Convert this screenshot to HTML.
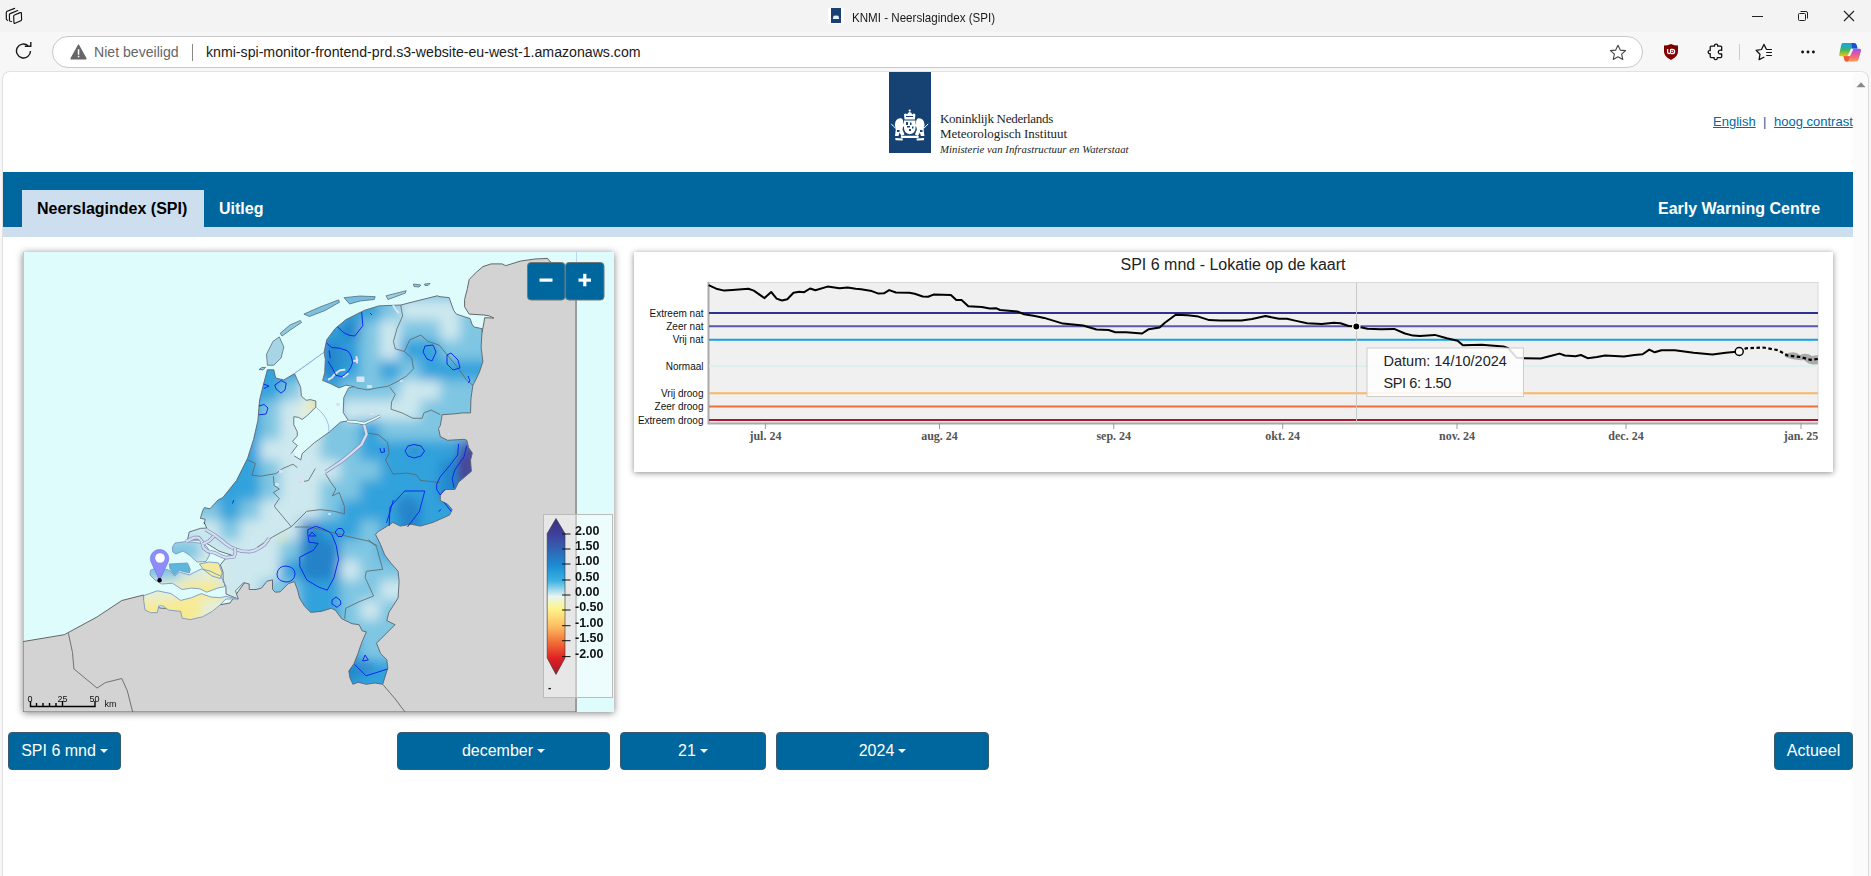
<!DOCTYPE html>
<html><head><meta charset="utf-8">
<style>
*{box-sizing:border-box;margin:0;padding:0}
html,body{width:1871px;height:876px;overflow:hidden;background:#f7f7f7;font-family:"Liberation Sans",sans-serif}
.abs{position:absolute}
#titlebar{position:absolute;left:0;top:0;width:1871px;height:32px;background:#f3f3f3}
#toolbar{position:absolute;left:0;top:32px;width:1871px;height:39px;background:#f7f7f7}
#addr{position:absolute;left:52px;top:36px;width:1591px;height:32px;border:1px solid #c9c9c9;border-radius:16px;background:#fff}
#page{position:absolute;left:2px;top:71px;width:1867px;height:805px;background:#fff;border-top-left-radius:8px;border-top-right-radius:8px;border-left:1px solid #e2e2e2;border-top:1px solid #e2e2e2;border-right:1px solid #dcdcdc;overflow:hidden}
#scroll{position:absolute;left:1853px;top:73px;width:15px;height:803px;background:#fbfbfb;border-top-right-radius:7px}
.btn{position:absolute;background:#00679e;border:1px solid #3a5a70;border-radius:4px;color:#fff;font-size:16px;text-align:center;line-height:36px}
.caret{display:inline-block;width:0;height:0;border-left:4px solid transparent;border-right:4px solid transparent;border-top:4px solid #fff;vertical-align:3px;margin-left:4px}
</style></head><body>
<div id="titlebar">
  <svg class="abs" style="left:0;top:0" width="30" height="30" viewBox="0 0 30 30"><g fill="none" stroke="#111" stroke-width="1.15" stroke-linecap="round" stroke-linejoin="round"><path d="M7.6,20.3 L6.6,19.6 Q6.3,19.3 6.3,18.8 L6.3,12.5 Q6.3,11.6 7.2,11.2 L14.6,8.4"/><path d="M11.6,21.5 L10.2,21.2 Q9.5,21 9.5,20.3 L9.4,14.8 Q9.4,14 10.2,13.6 L17.7,10.5"/><path d="M13.7,16.2 Q13.7,15.3 14.5,15 L20.2,12.6 Q21.4,12.2 21.4,13.4 L21.6,19.6 Q21.6,20.4 20.8,20.7 L15,23.2 Q13.9,23.6 13.9,22.4z"/></g></svg>
  <div class="abs" style="left:828px;top:8px;width:16px;height:16px;background:#fff"></div>
  <div class="abs" style="left:831px;top:8px;width:10px;height:15px;background:#1a3f73"></div><svg class="abs" style="left:831px;top:8px" width="10" height="15" viewBox="0 0 10 15"><path d="M1.8,11 L2.5,8 Q3.5,7 4.2,8 L5,7 L5.8,8 Q6.5,7 7.5,8 L8.2,11z" fill="#e8eef6"/></svg>
  <div class="abs" style="left:852px;top:8.5px;font-size:13.4px;color:#1a1a1a;line-height:18px;transform:scaleX(0.866);transform-origin:0 0;white-space:nowrap">KNMI - Neerslagindex (SPI)</div>
  <div class="abs" style="left:1752px;top:16px;width:11px;height:1px;background:#222"></div>
  <svg class="abs" style="left:1797px;top:10px" width="12" height="12" viewBox="0 0 12 12"><g fill="none" stroke="#222" stroke-width="1"><rect x="1.5" y="3.5" width="7" height="7" rx="1"/><path d="M3.5 1.5h5.5a1.5 1.5 0 0 1 1.5 1.5v5.5"/></g></svg>
  <svg class="abs" style="left:1843px;top:10px" width="12" height="12" viewBox="0 0 12 12"><path d="M1 1L11 11M11 1L1 11" stroke="#222" stroke-width="1.1"/></svg>
</div>
<div id="toolbar">
  <svg class="abs" style="left:15px;top:10px" width="18" height="18" viewBox="0 0 18 18"><path d="M15.5 9 A7 7 0 1 1 13.2 3.8" fill="none" stroke="#1a1a1a" stroke-width="1.4"/><path d="M9.8 4.2 L15.8 4.2 L15.8 -1" fill="none" stroke="#1a1a1a" stroke-width="1.4"/></svg>
</div>
<div id="addr">
  <svg class="abs" style="left:17px;top:7px" width="17" height="16" viewBox="0 0 17 16"><path d="M8.5 1 L16 14.5 Q16.3 15 15.5 15 L1.5 15 Q0.7 15 1 14.5z" fill="#666" stroke="#666" stroke-width="1.2" stroke-linejoin="round"/><rect x="7.8" y="5.2" width="1.5" height="5.5" fill="#fff"/><rect x="7.8" y="11.8" width="1.5" height="1.5" fill="#fff"/></svg>
  <div class="abs" style="left:41px;top:6px;font-size:14.1px;color:#666;line-height:18px">Niet beveiligd</div>
  <div class="abs" style="left:139px;top:7px;width:1px;height:17px;background:#888"></div>
  <div class="abs" style="left:153px;top:6px;font-size:14.15px;color:#1a1a1a;line-height:18px">knmi-spi-monitor-frontend-prd.s3-website-eu-west-1.amazonaws.com</div>
  <svg class="abs" style="left:1556px;top:7px" width="18" height="17" viewBox="0 0 18 17"><path d="M9 1.2 L11.3 6.1 L16.6 6.6 L12.6 10.2 L13.8 15.5 L9 12.7 L4.2 15.5 L5.4 10.2 L1.4 6.6 L6.7 6.1z" fill="none" stroke="#444" stroke-width="1.1" stroke-linejoin="round"/></svg>
</div>
<!-- toolbar right icons -->
<svg class="abs" style="left:1663px;top:43px" width="16" height="18" viewBox="0 0 16 18"><path d="M8 0.9 Q11.5 2.5 15 2.6 L15 8.5 Q15 13.5 8 17 Q1 13.5 1 8.5 L1 2.6 Q4.5 2.5 8 0.9z" fill="#800000"/><path d="M4.6,5.9 V9 Q4.6,10.6 6.1,10.6 Q7.6,10.6 7.6,9 V5.9" fill="none" stroke="#fff" stroke-width="1.3"/><path d="M7.9,6.3 H9.2 Q11.6,6.3 11.6,8.4 Q11.6,10.6 9.2,10.6 H7.9" fill="none" stroke="#fff" stroke-width="1.3"/><circle cx="9.3" cy="8.4" r="0.8" fill="#fff"/></svg>
<svg class="abs" style="left:1707px;top:43px" width="17" height="18" viewBox="0 0 17 18"><path d="M3.2,4.2 Q3.2,3.1 4.3,3.1 L7.6,3.1 Q7.2,1.2 9.1,1.2 Q11,1.2 10.6,3.1 L13.6,3.1 Q14.7,3.1 14.7,4.2 L14.7,7.3 Q11.3,6.8 11.3,9.1 Q11.3,11.4 14.7,10.9 L14.7,13.6 Q14.7,14.7 13.6,14.7 L10.2,14.7 Q10.6,16.6 8.7,16.6 Q6.8,16.6 7.2,14.7 L4.3,14.7 Q3.2,14.7 3.2,13.6 L3.2,10.6 Q1.2,11 1.2,9.1 Q1.2,7.2 3.2,7.6z" fill="none" stroke="#111" stroke-width="1.3" stroke-linejoin="round"/></svg>
<div class="abs" style="left:1739px;top:44px;width:1px;height:16px;background:#ccc"></div>
<svg class="abs" style="left:1755px;top:43px" width="19" height="18" viewBox="0 0 19 18"><path d="M8.9,14.2 L4.1,16.6 L5,11.2 L1.1,7.3 L6.5,6.5 L8.9,1.4 L11.4,6.3" fill="none" stroke="#111" stroke-width="1.25" stroke-linejoin="round" stroke-linecap="round"/><path d="M11.2,6.5h5.7M11.2,9.5h5.7M11.2,12.5h5.7" stroke="#111" stroke-width="1.2"/></svg>
<svg class="abs" style="left:1798px;top:48px" width="20" height="8" viewBox="0 0 20 8"><circle cx="4.6" cy="4" r="1.45" fill="#111"/><circle cx="10" cy="4" r="1.45" fill="#111"/><circle cx="15.4" cy="4" r="1.45" fill="#111"/></svg>
<svg class="abs" style="left:1836px;top:40px" width="28" height="24" viewBox="1836 40 28 24"><defs><linearGradient id="cg1" x1="0" y1="0" x2="0" y2="1"><stop offset="0" stop-color="#12a4f4"/><stop offset=".5" stop-color="#3cb46c"/><stop offset="1" stop-color="#f2cc00"/></linearGradient><linearGradient id="cg2" x1="0" y1="0" x2="0" y2="1"><stop offset="0" stop-color="#a050f0"/><stop offset=".55" stop-color="#f0608c"/><stop offset="1" stop-color="#ffa040"/></linearGradient></defs>
<path d="M1842.5,43 L1854,43 Q1856,43 1856.6,45 L1857.5,48.5 L1851,48.5 L1847.5,56.3 L1840.5,56.3 Q1838.8,56.3 1839.2,54.5 L1841,46 Q1841.5,43 1842.5,43z" fill="url(#cg1)"/>
<path d="M1851.5,43 L1854,43 Q1856,43 1856.6,45 L1857.5,48.5 L1852,48.5z" fill="#1a50d8"/>
<path d="M1859.5,48.8 Q1861.5,48.8 1861,51 L1858.5,59.5 Q1857.8,61.6 1855.5,61.6 L1846.5,61.6 Q1845,61.6 1844.5,60 L1843.5,56.3 L1850,56.3 L1853.5,48.8z" fill="url(#cg2)"/>
<path d="M1843.5,56.3 L1850,56.3 L1848,61.6 L1846.5,61.6 Q1845,61.6 1844.5,60z" fill="#f05a30"/></svg>

<div id="page">
</div>
<div id="scroll"><svg class="abs" style="left:2.5px;top:9px" width="10" height="6" viewBox="0 0 10 6"><path d="M5 0.3 L9.6 5.2 L0.4 5.2z" fill="#8a8a8a"/></svg></div>

<div id="content">
<!-- header -->
<div class="abs" style="left:889px;top:72px;width:42px;height:81px;background:#154273"></div>
<svg class="abs" style="left:889px;top:72px" width="42" height="81" viewBox="0 0 42 81">
<g fill="#fff">
<path d="M15.5,47.5 L15,42.5 Q16.5,40.5 18,42.5 Q19,40 20.7,40 Q22.4,40 23.4,42.5 Q25,40.5 26.4,42.5 L25.9,47.5z"/>
<circle cx="20.7" cy="38.6" r="1.1"/>
<path d="M15,48.5 H26.5 V56 Q26.5,61.5 20.7,62.2 Q15,61.5 15,56z"/>
<path d="M6,64 L6.8,57 Q5,53 6.5,49.5 Q8.5,46 12,46.3 Q14.5,47 14.3,50.5 L15.5,53.5 Q13.5,55 13.5,57.5 L15.5,62.5 L12.5,64 L10.5,60.5 L9.5,64z"/>
<path d="M6,64 L6.8,57 Q5,53 6.5,49.5 Q8.5,46 12,46.3 Q14.5,47 14.3,50.5 L15.5,53.5 Q13.5,55 13.5,57.5 L15.5,62.5 L12.5,64 L10.5,60.5 L9.5,64z" transform="translate(41.4,0) scale(-1,1)"/>
<rect x="11.8" y="63.8" width="18" height="2.3" rx="1"/>
<path d="M6.2,66 L13.9,66.4 L13.6,68.6 L6.6,68.2z"/>
<path d="M35.2,66 L27.5,66.4 L27.8,68.6 L34.8,68.2z"/>
</g>
<g fill="none" stroke="#fff" stroke-width="1">
<path d="M6.8,56.5 Q4,54 2.3,51.8"/><path d="M34.6,56.5 Q37.4,54 39.1,51.8"/>
</g>
<g fill="#154273">
<rect x="17" y="50" width="2" height="3"/><rect x="21" y="50.5" width="1.5" height="2.5"/><rect x="18" y="54" width="3" height="1.5"/><rect x="20" y="57" width="2" height="2"/><rect x="23" y="54.5" width="1.5" height="2"/>
<rect x="8" y="58" width="2.5" height="2"/><rect x="31" y="58" width="2.5" height="2"/><rect x="17" y="44" width="7" height="1"/>
</g>
</svg>
<div class="abs" style="left:940px;top:111px;font-family:'Liberation Serif',serif;font-size:13px;color:#242424;line-height:16px;letter-spacing:-0.27px">Koninklijk Nederlands</div>
<div class="abs" style="left:940px;top:126px;font-family:'Liberation Serif',serif;font-size:13px;color:#242424;line-height:16px;letter-spacing:-0.05px">Meteorologisch Instituut</div>
<div class="abs" style="left:940px;top:141.5px;font-family:'Liberation Serif',serif;font-style:italic;font-size:10.8px;color:#242424;line-height:14px">Ministerie van Infrastructuur en Waterstaat</div>
<div class="abs" style="left:1713px;top:114px;font-size:13px;line-height:16px;color:#0069a6"><span style="text-decoration:underline">English</span></div>
<div class="abs" style="left:1763px;top:114px;font-size:13px;line-height:16px;color:#0069a6">|</div>
<div class="abs" style="left:1774px;top:114px;font-size:13px;line-height:16px;color:#0069a6"><span style="text-decoration:underline">hoog contrast</span></div>
<!-- nav -->
<div class="abs" style="left:3px;top:172px;width:1850px;height:55px;background:#00679e"></div>
<div class="abs" style="left:3px;top:227px;width:1850px;height:10px;background:#cddeef"></div>
<div class="abs" style="left:22px;top:190px;width:182px;height:37px;background:#cddeef"></div>
<div class="abs" style="left:37px;top:200px;font-size:16px;font-weight:bold;line-height:18px;color:#000">Neerslagindex (SPI)</div>
<div class="abs" style="left:219px;top:200px;font-size:16px;font-weight:bold;line-height:18px;color:#fff">Uitleg</div>
<div class="abs" style="left:1658px;top:200px;font-size:16px;font-weight:bold;line-height:18px;color:#fff">Early Warning Centre</div>
<!-- map box -->
<div id="map" class="abs" style="left:23px;top:252px;width:591px;height:460px;background:#dffcfc;box-shadow:0 1px 7px rgba(0,0,0,.5);overflow:hidden">
<svg class="abs" style="left:0;top:0" width="591" height="460" viewBox="23 252 591 460">
<defs>
<filter id="blur6" x="-50%" y="-50%" width="200%" height="200%"><feGaussianBlur stdDeviation="6"/></filter>
<filter id="blur3" x="-50%" y="-50%" width="200%" height="200%"><feGaussianBlur stdDeviation="3.5"/></filter>
<clipPath id="landclip">
<polygon points="267.4,369.8 263.7,383.5 259.6,400 257.9,420.5 253.6,439.4 247.6,458.2 236.5,480.5 222.8,497.6 218,500 210,508.8 204.4,507.6 202.8,510.4 200.4,518.4 205.2,519.2 204.4,523.2 206.8,528 200.4,528.4 189.2,532 187.5,540 198.5,540.1 208.1,544.2 219,551.1 231.4,555.2 226,558 220.4,564.8 223,572 223.2,581.2 225.9,586.7 226,594 238.2,599 235.5,590.8 243.7,582.6 249.2,584 249.2,589.5 256,589.5 261.5,588.1 267,581.2 272.5,579.9 272.5,589.5 275.2,592.2 280,591.9 288.2,583.7 294.4,581.6 297.5,589.8 299.5,598 304.6,606.3 310.8,612.4 321.1,611.4 331.3,608.3 335.5,610.4 341.6,618.6 351.9,623.7 359.1,624.7 362.2,630.9 366.3,631.9 363.2,639.1 361.1,644.3 358,653.5 353.9,663.8 348.8,671 350,678 352.9,684.3 358,682.3 366.3,684.3 375,683 382.7,684.3 387.8,667.9 386.8,659.7 380.6,653.5 376.5,643.2 395,624.7 386.8,620.6 388.9,612.4 398.1,598 399.1,581.6 398.1,571.3 390.9,563.1 384.7,554.9 380.6,544.6 375.5,534.4 378.3,531.5 387.4,526.1 392.9,522.4 400.2,526.1 411.1,524.2 420.3,526.1 433,522.4 449.5,515.1 452.2,509.6 447.6,504.2 440.3,500.5 440.3,493.2 445.8,489.5 454.9,489.5 458.6,482.2 471.4,471.3 470.5,460.3 472.3,453 468.6,447.6 466.8,440.3 464.1,439.3 447.6,440.3 440.3,436.6 438.5,428.4 440.3,425.6 442.2,414.7 455,413.8 462.2,412.9 470.5,412.9 471,398 472.9,385.3 479.3,372.5 482.9,361.6 481.1,347 482,332.3 482,328.7 473.8,326.9 472,324.1 470.1,318.6 456.4,314.1 453.7,310.4 449.1,297.6 440,296.7 437.3,295.8 415.3,301.3 400.7,305 378.8,305.9 364.2,310.4 346,319.6 335,328.7 326.8,339.7 324,352.5 294.5,373.6 283.8,379.9 275.6,378 273.8,369.8"/>
<polygon points="267.4,365.2 266.5,354.3 272.9,341.5 279.3,336.9 283.8,347 281.1,358 273.8,365.2"/>
<polygon points="259,369.5 262,367.5 265.6,367.4 263,369.8"/>
<polygon points="280.2,333.3 290,325 300.3,320.5 301.5,322.5 291,329.5 282,336"/>
<polygon points="303.9,314.1 320,307 338.6,299.9 339.5,302.2 325,310.5 309.4,316.5"/>
<polygon points="344.1,297.7 360,296 375.2,296.7 374.2,299.5 360,301 349.6,304"/>
<polygon points="386.1,295.8 406.2,290.7 405.3,293.1 388,299.5"/>
<polygon points="413.5,284 420.8,285 419,287 414,286.5"/>
<polygon points="424.5,284 430,283.5 428,285.5 425,285.5"/>
<polygon points="172.4,547.2 175,543 186,541.6 196,542.5 204,544 208,548 209.5,555 206,561.5 197,562 190,555.5 183,551 176,554 172.8,552"/>
<polygon points="150.5,570.3 156,568 167,569.5 170.2,571 174.7,576 179.3,572 189.3,575 193,573 201.2,569 210,571 216,574 220.4,575.8 224.5,582.6 224.5,586.7 217.7,588.1 206.7,592.2 199.9,588.8 191.6,588.1 182.1,589.5 172.5,583.3 161.5,584 155,580 150,575"/>
<polygon points="143.7,595.6 157.4,590.8 171.1,593.6 180.7,600.4 191.6,597.7 201.2,593.6 210.8,597 220.4,597.7 225.9,596.3 238.2,599 225.9,599 219,605.9 212.2,611.4 202.6,616.8 190.3,619.6 182.1,618.2 180.7,611.4 168.4,610 162.9,605.9 158.8,605.9 157.4,612.7 150.5,612.7 145,610 143.7,600.4"/>
</clipPath>
<linearGradient id="legend" x1="0" y1="0" x2="0" y2="1">
<stop offset="0" stop-color="#3a2f85"/><stop offset="0.1" stop-color="#3f3f9a"/><stop offset="0.2" stop-color="#3264b4"/><stop offset="0.3" stop-color="#1a8cd4"/><stop offset="0.4" stop-color="#3cb2e2"/><stop offset="0.5" stop-color="#e8f5f0"/><stop offset="0.58" stop-color="#fff48a"/><stop offset="0.7" stop-color="#fcb85e"/><stop offset="0.8" stop-color="#f06a34"/><stop offset="0.9" stop-color="#e01e24"/><stop offset="1" stop-color="#9e1e28"/>
</linearGradient>
</defs>
<polygon points="576,268 556,266 548.6,260.2 547.7,258.4 535,259 520.3,261.1 505.7,265.7 502.1,263.9 491.1,263.9 482.9,266.6 476.5,272.1 469.2,279.4 467.4,288.5 464.6,299.5 464.6,306.8 469.2,314.1 483.8,315 489.3,315.9 493.9,318.1 484.7,317.7 483.5,325 482,332.3 430,430 350,560 250,575 230,603 190,610 160,608 143.7,600 143.7,595 121.8,600.5 97.1,616.9 64.3,634.7 23,641.6 23,712 576,712" fill="#d3d3d3" stroke="#666" stroke-width="1"/>
<rect x="576" y="252" width="38" height="460" fill="#dffcfc"/>
<line x1="23.5" y1="252" x2="23.5" y2="641" stroke="#a8ccf8" stroke-width="1"/>
<line x1="576.5" y1="252" x2="576.5" y2="712" stroke="#9a9a9a" stroke-width="1"/>
<line x1="576.5" y1="252" x2="576.5" y2="262" stroke="#b8d8f0" stroke-width="1"/>
<polyline points="68.4,633.3 72.5,652.5 73.9,668.9 97.1,688.1 105.4,682.6 121.8,678.5 127.3,690.8 132.7,712" fill="none" stroke="#666" stroke-width="0.9"/>
<polyline points="382.7,684.3 395,698.7 405,712" fill="none" stroke="#666" stroke-width="0.9"/>
<g clip-path="url(#landclip)">
<g filter="url(#blur6)">
<rect x="120" y="260" width="20" height="20" fill="#7ec6e2"/>
<rect x="140" y="260" width="20" height="20" fill="#7ec6e2"/>
<rect x="160" y="260" width="20" height="20" fill="#7ec6e2"/>
<rect x="180" y="260" width="20" height="20" fill="#7ec6e2"/>
<rect x="200" y="260" width="20" height="20" fill="#7ec6e2"/>
<rect x="220" y="260" width="20" height="20" fill="#7ec6e2"/>
<rect x="240" y="260" width="20" height="20" fill="#7ec6e2"/>
<rect x="260" y="260" width="20" height="20" fill="#7ec6e2"/>
<rect x="280" y="260" width="20" height="20" fill="#7ec6e2"/>
<rect x="300" y="260" width="20" height="20" fill="#7ec6e2"/>
<rect x="320" y="260" width="20" height="20" fill="#7ec6e2"/>
<rect x="340" y="260" width="20" height="20" fill="#7ec6e2"/>
<rect x="360" y="260" width="20" height="20" fill="#7ec6e2"/>
<rect x="380" y="260" width="20" height="20" fill="#7ec6e2"/>
<rect x="400" y="260" width="20" height="20" fill="#7ec6e2"/>
<rect x="420" y="260" width="20" height="20" fill="#7ec6e2"/>
<rect x="440" y="260" width="20" height="20" fill="#7ec6e2"/>
<rect x="460" y="260" width="20" height="20" fill="#7ec6e2"/>
<rect x="480" y="260" width="20" height="20" fill="#7ec6e2"/>
<rect x="120" y="280" width="20" height="20" fill="#7ec6e2"/>
<rect x="140" y="280" width="20" height="20" fill="#7ec6e2"/>
<rect x="160" y="280" width="20" height="20" fill="#7ec6e2"/>
<rect x="180" y="280" width="20" height="20" fill="#7ec6e2"/>
<rect x="200" y="280" width="20" height="20" fill="#7ec6e2"/>
<rect x="220" y="280" width="20" height="20" fill="#7ec6e2"/>
<rect x="240" y="280" width="20" height="20" fill="#7ec6e2"/>
<rect x="260" y="280" width="20" height="20" fill="#7ec6e2"/>
<rect x="280" y="280" width="20" height="20" fill="#7ec6e2"/>
<rect x="300" y="280" width="20" height="20" fill="#7ec6e2"/>
<rect x="320" y="280" width="20" height="20" fill="#7ec6e2"/>
<rect x="340" y="280" width="20" height="20" fill="#7ec6e2"/>
<rect x="360" y="280" width="20" height="20" fill="#7ec6e2"/>
<rect x="380" y="280" width="20" height="20" fill="#7ec6e2"/>
<rect x="400" y="280" width="20" height="20" fill="#7ec6e2"/>
<rect x="420" y="280" width="20" height="20" fill="#7ec6e2"/>
<rect x="440" y="280" width="20" height="20" fill="#7ec6e2"/>
<rect x="460" y="280" width="20" height="20" fill="#7ec6e2"/>
<rect x="480" y="280" width="20" height="20" fill="#7ec6e2"/>
<rect x="120" y="300" width="20" height="20" fill="#7ec6e2"/>
<rect x="140" y="300" width="20" height="20" fill="#7ec6e2"/>
<rect x="160" y="300" width="20" height="20" fill="#7ec6e2"/>
<rect x="180" y="300" width="20" height="20" fill="#7ec6e2"/>
<rect x="200" y="300" width="20" height="20" fill="#7ec6e2"/>
<rect x="220" y="300" width="20" height="20" fill="#7ec6e2"/>
<rect x="240" y="300" width="20" height="20" fill="#7ec6e2"/>
<rect x="260" y="300" width="20" height="20" fill="#7ec6e2"/>
<rect x="280" y="300" width="20" height="20" fill="#7ec6e2"/>
<rect x="300" y="300" width="20" height="20" fill="#7ec6e2"/>
<rect x="320" y="300" width="20" height="20" fill="#7ec6e2"/>
<rect x="340" y="300" width="20" height="20" fill="#30a2dc"/>
<rect x="360" y="300" width="20" height="20" fill="#30a2dc"/>
<rect x="380" y="300" width="20" height="20" fill="#7ec6e2"/>
<rect x="400" y="300" width="20" height="20" fill="#cde8ee"/>
<rect x="420" y="300" width="20" height="20" fill="#cde8ee"/>
<rect x="440" y="300" width="20" height="20" fill="#cde8ee"/>
<rect x="460" y="300" width="20" height="20" fill="#7ec6e2"/>
<rect x="480" y="300" width="20" height="20" fill="#7ec6e2"/>
<rect x="120" y="320" width="20" height="20" fill="#7ec6e2"/>
<rect x="140" y="320" width="20" height="20" fill="#7ec6e2"/>
<rect x="160" y="320" width="20" height="20" fill="#7ec6e2"/>
<rect x="180" y="320" width="20" height="20" fill="#7ec6e2"/>
<rect x="200" y="320" width="20" height="20" fill="#7ec6e2"/>
<rect x="220" y="320" width="20" height="20" fill="#7ec6e2"/>
<rect x="240" y="320" width="20" height="20" fill="#7ec6e2"/>
<rect x="260" y="320" width="20" height="20" fill="#7ec6e2"/>
<rect x="280" y="320" width="20" height="20" fill="#7ec6e2"/>
<rect x="300" y="320" width="20" height="20" fill="#7ec6e2"/>
<rect x="320" y="320" width="20" height="20" fill="#30a2dc"/>
<rect x="340" y="320" width="20" height="20" fill="#2086cc"/>
<rect x="360" y="320" width="20" height="20" fill="#7ec6e2"/>
<rect x="380" y="320" width="20" height="20" fill="#cde8ee"/>
<rect x="400" y="320" width="20" height="20" fill="#7ec6e2"/>
<rect x="420" y="320" width="20" height="20" fill="#7ec6e2"/>
<rect x="440" y="320" width="20" height="20" fill="#cde8ee"/>
<rect x="460" y="320" width="20" height="20" fill="#7ec6e2"/>
<rect x="480" y="320" width="20" height="20" fill="#7ec6e2"/>
<rect x="120" y="340" width="20" height="20" fill="#30a2dc"/>
<rect x="140" y="340" width="20" height="20" fill="#30a2dc"/>
<rect x="160" y="340" width="20" height="20" fill="#7ec6e2"/>
<rect x="180" y="340" width="20" height="20" fill="#7ec6e2"/>
<rect x="200" y="340" width="20" height="20" fill="#7ec6e2"/>
<rect x="220" y="340" width="20" height="20" fill="#7ec6e2"/>
<rect x="240" y="340" width="20" height="20" fill="#7ec6e2"/>
<rect x="260" y="340" width="20" height="20" fill="#7ec6e2"/>
<rect x="280" y="340" width="20" height="20" fill="#7ec6e2"/>
<rect x="300" y="340" width="20" height="20" fill="#7ec6e2"/>
<rect x="320" y="340" width="20" height="20" fill="#2086cc"/>
<rect x="340" y="340" width="20" height="20" fill="#30a2dc"/>
<rect x="360" y="340" width="20" height="20" fill="#7ec6e2"/>
<rect x="380" y="340" width="20" height="20" fill="#cde8ee"/>
<rect x="400" y="340" width="20" height="20" fill="#30a2dc"/>
<rect x="420" y="340" width="20" height="20" fill="#30a2dc"/>
<rect x="440" y="340" width="20" height="20" fill="#7ec6e2"/>
<rect x="460" y="340" width="20" height="20" fill="#7ec6e2"/>
<rect x="480" y="340" width="20" height="20" fill="#7ec6e2"/>
<rect x="120" y="360" width="20" height="20" fill="#30a2dc"/>
<rect x="140" y="360" width="20" height="20" fill="#30a2dc"/>
<rect x="160" y="360" width="20" height="20" fill="#30a2dc"/>
<rect x="180" y="360" width="20" height="20" fill="#30a2dc"/>
<rect x="200" y="360" width="20" height="20" fill="#30a2dc"/>
<rect x="220" y="360" width="20" height="20" fill="#30a2dc"/>
<rect x="240" y="360" width="20" height="20" fill="#30a2dc"/>
<rect x="260" y="360" width="20" height="20" fill="#30a2dc"/>
<rect x="280" y="360" width="20" height="20" fill="#30a2dc"/>
<rect x="300" y="360" width="20" height="20" fill="#30a2dc"/>
<rect x="320" y="360" width="20" height="20" fill="#2086cc"/>
<rect x="340" y="360" width="20" height="20" fill="#30a2dc"/>
<rect x="360" y="360" width="20" height="20" fill="#7ec6e2"/>
<rect x="380" y="360" width="20" height="20" fill="#30a2dc"/>
<rect x="400" y="360" width="20" height="20" fill="#7ec6e2"/>
<rect x="420" y="360" width="20" height="20" fill="#30a2dc"/>
<rect x="440" y="360" width="20" height="20" fill="#30a2dc"/>
<rect x="460" y="360" width="20" height="20" fill="#30a2dc"/>
<rect x="480" y="360" width="20" height="20" fill="#30a2dc"/>
<rect x="120" y="380" width="20" height="20" fill="#30a2dc"/>
<rect x="140" y="380" width="20" height="20" fill="#30a2dc"/>
<rect x="160" y="380" width="20" height="20" fill="#30a2dc"/>
<rect x="180" y="380" width="20" height="20" fill="#30a2dc"/>
<rect x="200" y="380" width="20" height="20" fill="#30a2dc"/>
<rect x="220" y="380" width="20" height="20" fill="#30a2dc"/>
<rect x="240" y="380" width="20" height="20" fill="#30a2dc"/>
<rect x="260" y="380" width="20" height="20" fill="#30a2dc"/>
<rect x="280" y="380" width="20" height="20" fill="#7ec6e2"/>
<rect x="300" y="380" width="20" height="20" fill="#cde8ee"/>
<rect x="320" y="380" width="20" height="20" fill="#30a2dc"/>
<rect x="340" y="380" width="20" height="20" fill="#7ec6e2"/>
<rect x="360" y="380" width="20" height="20" fill="#7ec6e2"/>
<rect x="380" y="380" width="20" height="20" fill="#7ec6e2"/>
<rect x="400" y="380" width="20" height="20" fill="#cde8ee"/>
<rect x="420" y="380" width="20" height="20" fill="#cde8ee"/>
<rect x="440" y="380" width="20" height="20" fill="#7ec6e2"/>
<rect x="460" y="380" width="20" height="20" fill="#7ec6e2"/>
<rect x="480" y="380" width="20" height="20" fill="#7ec6e2"/>
<rect x="120" y="400" width="20" height="20" fill="#30a2dc"/>
<rect x="140" y="400" width="20" height="20" fill="#30a2dc"/>
<rect x="160" y="400" width="20" height="20" fill="#30a2dc"/>
<rect x="180" y="400" width="20" height="20" fill="#30a2dc"/>
<rect x="200" y="400" width="20" height="20" fill="#30a2dc"/>
<rect x="220" y="400" width="20" height="20" fill="#30a2dc"/>
<rect x="240" y="400" width="20" height="20" fill="#30a2dc"/>
<rect x="260" y="400" width="20" height="20" fill="#7ec6e2"/>
<rect x="280" y="400" width="20" height="20" fill="#cde8ee"/>
<rect x="300" y="400" width="20" height="20" fill="#e4efdc"/>
<rect x="320" y="400" width="20" height="20" fill="#30a2dc"/>
<rect x="340" y="400" width="20" height="20" fill="#cde8ee"/>
<rect x="360" y="400" width="20" height="20" fill="#cde8ee"/>
<rect x="380" y="400" width="20" height="20" fill="#cde8ee"/>
<rect x="400" y="400" width="20" height="20" fill="#cde8ee"/>
<rect x="420" y="400" width="20" height="20" fill="#7ec6e2"/>
<rect x="440" y="400" width="20" height="20" fill="#7ec6e2"/>
<rect x="460" y="400" width="20" height="20" fill="#7ec6e2"/>
<rect x="480" y="400" width="20" height="20" fill="#7ec6e2"/>
<rect x="120" y="420" width="20" height="20" fill="#30a2dc"/>
<rect x="140" y="420" width="20" height="20" fill="#30a2dc"/>
<rect x="160" y="420" width="20" height="20" fill="#30a2dc"/>
<rect x="180" y="420" width="20" height="20" fill="#30a2dc"/>
<rect x="200" y="420" width="20" height="20" fill="#30a2dc"/>
<rect x="220" y="420" width="20" height="20" fill="#30a2dc"/>
<rect x="240" y="420" width="20" height="20" fill="#30a2dc"/>
<rect x="260" y="420" width="20" height="20" fill="#7ec6e2"/>
<rect x="280" y="420" width="20" height="20" fill="#cde8ee"/>
<rect x="300" y="420" width="20" height="20" fill="#e4efdc"/>
<rect x="320" y="420" width="20" height="20" fill="#7ec6e2"/>
<rect x="340" y="420" width="20" height="20" fill="#7ec6e2"/>
<rect x="360" y="420" width="20" height="20" fill="#30a2dc"/>
<rect x="380" y="420" width="20" height="20" fill="#7ec6e2"/>
<rect x="400" y="420" width="20" height="20" fill="#7ec6e2"/>
<rect x="420" y="420" width="20" height="20" fill="#7ec6e2"/>
<rect x="440" y="420" width="20" height="20" fill="#7ec6e2"/>
<rect x="460" y="420" width="20" height="20" fill="#7ec6e2"/>
<rect x="480" y="420" width="20" height="20" fill="#4a4c9e"/>
<rect x="120" y="440" width="20" height="20" fill="#7ec6e2"/>
<rect x="140" y="440" width="20" height="20" fill="#30a2dc"/>
<rect x="160" y="440" width="20" height="20" fill="#30a2dc"/>
<rect x="180" y="440" width="20" height="20" fill="#30a2dc"/>
<rect x="200" y="440" width="20" height="20" fill="#30a2dc"/>
<rect x="220" y="440" width="20" height="20" fill="#30a2dc"/>
<rect x="240" y="440" width="20" height="20" fill="#30a2dc"/>
<rect x="260" y="440" width="20" height="20" fill="#cde8ee"/>
<rect x="280" y="440" width="20" height="20" fill="#cde8ee"/>
<rect x="300" y="440" width="20" height="20" fill="#cde8ee"/>
<rect x="320" y="440" width="20" height="20" fill="#7ec6e2"/>
<rect x="340" y="440" width="20" height="20" fill="#7ec6e2"/>
<rect x="360" y="440" width="20" height="20" fill="#30a2dc"/>
<rect x="380" y="440" width="20" height="20" fill="#30a2dc"/>
<rect x="400" y="440" width="20" height="20" fill="#30a2dc"/>
<rect x="420" y="440" width="20" height="20" fill="#30a2dc"/>
<rect x="440" y="440" width="20" height="20" fill="#30a2dc"/>
<rect x="460" y="440" width="20" height="20" fill="#4a4c9e"/>
<rect x="480" y="440" width="20" height="20" fill="#4a4c9e"/>
<rect x="120" y="460" width="20" height="20" fill="#7ec6e2"/>
<rect x="140" y="460" width="20" height="20" fill="#7ec6e2"/>
<rect x="160" y="460" width="20" height="20" fill="#30a2dc"/>
<rect x="180" y="460" width="20" height="20" fill="#30a2dc"/>
<rect x="200" y="460" width="20" height="20" fill="#30a2dc"/>
<rect x="220" y="460" width="20" height="20" fill="#30a2dc"/>
<rect x="240" y="460" width="20" height="20" fill="#30a2dc"/>
<rect x="260" y="460" width="20" height="20" fill="#7ec6e2"/>
<rect x="280" y="460" width="20" height="20" fill="#cde8ee"/>
<rect x="300" y="460" width="20" height="20" fill="#cde8ee"/>
<rect x="320" y="460" width="20" height="20" fill="#cde8ee"/>
<rect x="340" y="460" width="20" height="20" fill="#7ec6e2"/>
<rect x="360" y="460" width="20" height="20" fill="#7ec6e2"/>
<rect x="380" y="460" width="20" height="20" fill="#30a2dc"/>
<rect x="400" y="460" width="20" height="20" fill="#30a2dc"/>
<rect x="420" y="460" width="20" height="20" fill="#30a2dc"/>
<rect x="440" y="460" width="20" height="20" fill="#2086cc"/>
<rect x="460" y="460" width="20" height="20" fill="#4a4c9e"/>
<rect x="480" y="460" width="20" height="20" fill="#4a4c9e"/>
<rect x="120" y="480" width="20" height="20" fill="#7ec6e2"/>
<rect x="140" y="480" width="20" height="20" fill="#7ec6e2"/>
<rect x="160" y="480" width="20" height="20" fill="#7ec6e2"/>
<rect x="180" y="480" width="20" height="20" fill="#30a2dc"/>
<rect x="200" y="480" width="20" height="20" fill="#30a2dc"/>
<rect x="220" y="480" width="20" height="20" fill="#30a2dc"/>
<rect x="240" y="480" width="20" height="20" fill="#30a2dc"/>
<rect x="260" y="480" width="20" height="20" fill="#7ec6e2"/>
<rect x="280" y="480" width="20" height="20" fill="#cde8ee"/>
<rect x="300" y="480" width="20" height="20" fill="#cde8ee"/>
<rect x="320" y="480" width="20" height="20" fill="#7ec6e2"/>
<rect x="340" y="480" width="20" height="20" fill="#7ec6e2"/>
<rect x="360" y="480" width="20" height="20" fill="#30a2dc"/>
<rect x="380" y="480" width="20" height="20" fill="#30a2dc"/>
<rect x="400" y="480" width="20" height="20" fill="#30a2dc"/>
<rect x="420" y="480" width="20" height="20" fill="#30a2dc"/>
<rect x="440" y="480" width="20" height="20" fill="#2086cc"/>
<rect x="460" y="480" width="20" height="20" fill="#4a4c9e"/>
<rect x="480" y="480" width="20" height="20" fill="#4a4c9e"/>
<rect x="120" y="500" width="20" height="20" fill="#7ec6e2"/>
<rect x="140" y="500" width="20" height="20" fill="#7ec6e2"/>
<rect x="160" y="500" width="20" height="20" fill="#7ec6e2"/>
<rect x="180" y="500" width="20" height="20" fill="#7ec6e2"/>
<rect x="200" y="500" width="20" height="20" fill="#7ec6e2"/>
<rect x="220" y="500" width="20" height="20" fill="#30a2dc"/>
<rect x="240" y="500" width="20" height="20" fill="#7ec6e2"/>
<rect x="260" y="500" width="20" height="20" fill="#cde8ee"/>
<rect x="280" y="500" width="20" height="20" fill="#cde8ee"/>
<rect x="300" y="500" width="20" height="20" fill="#cde8ee"/>
<rect x="320" y="500" width="20" height="20" fill="#7ec6e2"/>
<rect x="340" y="500" width="20" height="20" fill="#30a2dc"/>
<rect x="360" y="500" width="20" height="20" fill="#30a2dc"/>
<rect x="380" y="500" width="20" height="20" fill="#30a2dc"/>
<rect x="400" y="500" width="20" height="20" fill="#2086cc"/>
<rect x="420" y="500" width="20" height="20" fill="#30a2dc"/>
<rect x="440" y="500" width="20" height="20" fill="#30a2dc"/>
<rect x="460" y="500" width="20" height="20" fill="#4a4c9e"/>
<rect x="480" y="500" width="20" height="20" fill="#4a4c9e"/>
<rect x="120" y="520" width="20" height="20" fill="#7ec6e2"/>
<rect x="140" y="520" width="20" height="20" fill="#7ec6e2"/>
<rect x="160" y="520" width="20" height="20" fill="#cde8ee"/>
<rect x="180" y="520" width="20" height="20" fill="#cde8ee"/>
<rect x="200" y="520" width="20" height="20" fill="#cde8ee"/>
<rect x="220" y="520" width="20" height="20" fill="#7ec6e2"/>
<rect x="240" y="520" width="20" height="20" fill="#cde8ee"/>
<rect x="260" y="520" width="20" height="20" fill="#cde8ee"/>
<rect x="280" y="520" width="20" height="20" fill="#cde8ee"/>
<rect x="300" y="520" width="20" height="20" fill="#2086cc"/>
<rect x="320" y="520" width="20" height="20" fill="#30a2dc"/>
<rect x="340" y="520" width="20" height="20" fill="#30a2dc"/>
<rect x="360" y="520" width="20" height="20" fill="#7ec6e2"/>
<rect x="380" y="520" width="20" height="20" fill="#30a2dc"/>
<rect x="400" y="520" width="20" height="20" fill="#2086cc"/>
<rect x="420" y="520" width="20" height="20" fill="#30a2dc"/>
<rect x="440" y="520" width="20" height="20" fill="#30a2dc"/>
<rect x="460" y="520" width="20" height="20" fill="#30a2dc"/>
<rect x="480" y="520" width="20" height="20" fill="#4a4c9e"/>
<rect x="120" y="540" width="20" height="20" fill="#7ec6e2"/>
<rect x="140" y="540" width="20" height="20" fill="#7ec6e2"/>
<rect x="160" y="540" width="20" height="20" fill="#7ec6e2"/>
<rect x="180" y="540" width="20" height="20" fill="#7ec6e2"/>
<rect x="200" y="540" width="20" height="20" fill="#cde8ee"/>
<rect x="220" y="540" width="20" height="20" fill="#cde8ee"/>
<rect x="240" y="540" width="20" height="20" fill="#cde8ee"/>
<rect x="260" y="540" width="20" height="20" fill="#cde8ee"/>
<rect x="280" y="540" width="20" height="20" fill="#7ec6e2"/>
<rect x="300" y="540" width="20" height="20" fill="#2086cc"/>
<rect x="320" y="540" width="20" height="20" fill="#2086cc"/>
<rect x="340" y="540" width="20" height="20" fill="#7ec6e2"/>
<rect x="360" y="540" width="20" height="20" fill="#7ec6e2"/>
<rect x="380" y="540" width="20" height="20" fill="#30a2dc"/>
<rect x="400" y="540" width="20" height="20" fill="#30a2dc"/>
<rect x="420" y="540" width="20" height="20" fill="#30a2dc"/>
<rect x="440" y="540" width="20" height="20" fill="#30a2dc"/>
<rect x="460" y="540" width="20" height="20" fill="#30a2dc"/>
<rect x="480" y="540" width="20" height="20" fill="#30a2dc"/>
<rect x="120" y="560" width="20" height="20" fill="#7ec6e2"/>
<rect x="140" y="560" width="20" height="20" fill="#7ec6e2"/>
<rect x="160" y="560" width="20" height="20" fill="#7ec6e2"/>
<rect x="180" y="560" width="20" height="20" fill="#cde8ee"/>
<rect x="200" y="560" width="20" height="20" fill="#e4efdc"/>
<rect x="220" y="560" width="20" height="20" fill="#cde8ee"/>
<rect x="240" y="560" width="20" height="20" fill="#cde8ee"/>
<rect x="260" y="560" width="20" height="20" fill="#cde8ee"/>
<rect x="280" y="560" width="20" height="20" fill="#30a2dc"/>
<rect x="300" y="560" width="20" height="20" fill="#2086cc"/>
<rect x="320" y="560" width="20" height="20" fill="#2086cc"/>
<rect x="340" y="560" width="20" height="20" fill="#cde8ee"/>
<rect x="360" y="560" width="20" height="20" fill="#7ec6e2"/>
<rect x="380" y="560" width="20" height="20" fill="#7ec6e2"/>
<rect x="400" y="560" width="20" height="20" fill="#7ec6e2"/>
<rect x="420" y="560" width="20" height="20" fill="#7ec6e2"/>
<rect x="440" y="560" width="20" height="20" fill="#30a2dc"/>
<rect x="460" y="560" width="20" height="20" fill="#30a2dc"/>
<rect x="480" y="560" width="20" height="20" fill="#30a2dc"/>
<rect x="120" y="580" width="20" height="20" fill="#e4efdc"/>
<rect x="140" y="580" width="20" height="20" fill="#e4efdc"/>
<rect x="160" y="580" width="20" height="20" fill="#e4efdc"/>
<rect x="180" y="580" width="20" height="20" fill="#f6ea96"/>
<rect x="200" y="580" width="20" height="20" fill="#f6ea96"/>
<rect x="220" y="580" width="20" height="20" fill="#cde8ee"/>
<rect x="240" y="580" width="20" height="20" fill="#cde8ee"/>
<rect x="260" y="580" width="20" height="20" fill="#7ec6e2"/>
<rect x="280" y="580" width="20" height="20" fill="#7ec6e2"/>
<rect x="300" y="580" width="20" height="20" fill="#30a2dc"/>
<rect x="320" y="580" width="20" height="20" fill="#30a2dc"/>
<rect x="340" y="580" width="20" height="20" fill="#7ec6e2"/>
<rect x="360" y="580" width="20" height="20" fill="#7ec6e2"/>
<rect x="380" y="580" width="20" height="20" fill="#cde8ee"/>
<rect x="400" y="580" width="20" height="20" fill="#cde8ee"/>
<rect x="420" y="580" width="20" height="20" fill="#cde8ee"/>
<rect x="440" y="580" width="20" height="20" fill="#cde8ee"/>
<rect x="460" y="580" width="20" height="20" fill="#cde8ee"/>
<rect x="480" y="580" width="20" height="20" fill="#30a2dc"/>
<rect x="120" y="600" width="20" height="20" fill="#f6ea96"/>
<rect x="140" y="600" width="20" height="20" fill="#f6ea96"/>
<rect x="160" y="600" width="20" height="20" fill="#f6ea96"/>
<rect x="180" y="600" width="20" height="20" fill="#f6ea96"/>
<rect x="200" y="600" width="20" height="20" fill="#e4efdc"/>
<rect x="220" y="600" width="20" height="20" fill="#e4efdc"/>
<rect x="240" y="600" width="20" height="20" fill="#cde8ee"/>
<rect x="260" y="600" width="20" height="20" fill="#7ec6e2"/>
<rect x="280" y="600" width="20" height="20" fill="#7ec6e2"/>
<rect x="300" y="600" width="20" height="20" fill="#30a2dc"/>
<rect x="320" y="600" width="20" height="20" fill="#30a2dc"/>
<rect x="340" y="600" width="20" height="20" fill="#7ec6e2"/>
<rect x="360" y="600" width="20" height="20" fill="#cde8ee"/>
<rect x="380" y="600" width="20" height="20" fill="#7ec6e2"/>
<rect x="400" y="600" width="20" height="20" fill="#7ec6e2"/>
<rect x="420" y="600" width="20" height="20" fill="#7ec6e2"/>
<rect x="440" y="600" width="20" height="20" fill="#7ec6e2"/>
<rect x="460" y="600" width="20" height="20" fill="#7ec6e2"/>
<rect x="480" y="600" width="20" height="20" fill="#7ec6e2"/>
<rect x="120" y="620" width="20" height="20" fill="#f6ea96"/>
<rect x="140" y="620" width="20" height="20" fill="#f6ea96"/>
<rect x="160" y="620" width="20" height="20" fill="#f6ea96"/>
<rect x="180" y="620" width="20" height="20" fill="#f6ea96"/>
<rect x="200" y="620" width="20" height="20" fill="#e4efdc"/>
<rect x="220" y="620" width="20" height="20" fill="#e4efdc"/>
<rect x="240" y="620" width="20" height="20" fill="#e4efdc"/>
<rect x="260" y="620" width="20" height="20" fill="#7ec6e2"/>
<rect x="280" y="620" width="20" height="20" fill="#30a2dc"/>
<rect x="300" y="620" width="20" height="20" fill="#30a2dc"/>
<rect x="320" y="620" width="20" height="20" fill="#30a2dc"/>
<rect x="340" y="620" width="20" height="20" fill="#7ec6e2"/>
<rect x="360" y="620" width="20" height="20" fill="#7ec6e2"/>
<rect x="380" y="620" width="20" height="20" fill="#7ec6e2"/>
<rect x="400" y="620" width="20" height="20" fill="#7ec6e2"/>
<rect x="420" y="620" width="20" height="20" fill="#7ec6e2"/>
<rect x="440" y="620" width="20" height="20" fill="#7ec6e2"/>
<rect x="460" y="620" width="20" height="20" fill="#7ec6e2"/>
<rect x="480" y="620" width="20" height="20" fill="#7ec6e2"/>
<rect x="120" y="640" width="20" height="20" fill="#f6ea96"/>
<rect x="140" y="640" width="20" height="20" fill="#f6ea96"/>
<rect x="160" y="640" width="20" height="20" fill="#f6ea96"/>
<rect x="180" y="640" width="20" height="20" fill="#f6ea96"/>
<rect x="200" y="640" width="20" height="20" fill="#e4efdc"/>
<rect x="220" y="640" width="20" height="20" fill="#e4efdc"/>
<rect x="240" y="640" width="20" height="20" fill="#e4efdc"/>
<rect x="260" y="640" width="20" height="20" fill="#e4efdc"/>
<rect x="280" y="640" width="20" height="20" fill="#30a2dc"/>
<rect x="300" y="640" width="20" height="20" fill="#30a2dc"/>
<rect x="320" y="640" width="20" height="20" fill="#30a2dc"/>
<rect x="340" y="640" width="20" height="20" fill="#30a2dc"/>
<rect x="360" y="640" width="20" height="20" fill="#7ec6e2"/>
<rect x="380" y="640" width="20" height="20" fill="#7ec6e2"/>
<rect x="400" y="640" width="20" height="20" fill="#7ec6e2"/>
<rect x="420" y="640" width="20" height="20" fill="#7ec6e2"/>
<rect x="440" y="640" width="20" height="20" fill="#7ec6e2"/>
<rect x="460" y="640" width="20" height="20" fill="#7ec6e2"/>
<rect x="480" y="640" width="20" height="20" fill="#7ec6e2"/>
<rect x="120" y="660" width="20" height="20" fill="#f6ea96"/>
<rect x="140" y="660" width="20" height="20" fill="#f6ea96"/>
<rect x="160" y="660" width="20" height="20" fill="#f6ea96"/>
<rect x="180" y="660" width="20" height="20" fill="#f6ea96"/>
<rect x="200" y="660" width="20" height="20" fill="#e4efdc"/>
<rect x="220" y="660" width="20" height="20" fill="#e4efdc"/>
<rect x="240" y="660" width="20" height="20" fill="#e4efdc"/>
<rect x="260" y="660" width="20" height="20" fill="#e4efdc"/>
<rect x="280" y="660" width="20" height="20" fill="#2086cc"/>
<rect x="300" y="660" width="20" height="20" fill="#2086cc"/>
<rect x="320" y="660" width="20" height="20" fill="#2086cc"/>
<rect x="340" y="660" width="20" height="20" fill="#2086cc"/>
<rect x="360" y="660" width="20" height="20" fill="#30a2dc"/>
<rect x="380" y="660" width="20" height="20" fill="#30a2dc"/>
<rect x="400" y="660" width="20" height="20" fill="#30a2dc"/>
<rect x="420" y="660" width="20" height="20" fill="#30a2dc"/>
<rect x="440" y="660" width="20" height="20" fill="#30a2dc"/>
<rect x="460" y="660" width="20" height="20" fill="#30a2dc"/>
<rect x="480" y="660" width="20" height="20" fill="#30a2dc"/>
<rect x="120" y="680" width="20" height="20" fill="#f6ea96"/>
<rect x="140" y="680" width="20" height="20" fill="#f6ea96"/>
<rect x="160" y="680" width="20" height="20" fill="#f6ea96"/>
<rect x="180" y="680" width="20" height="20" fill="#f6ea96"/>
<rect x="200" y="680" width="20" height="20" fill="#e4efdc"/>
<rect x="220" y="680" width="20" height="20" fill="#e4efdc"/>
<rect x="240" y="680" width="20" height="20" fill="#e4efdc"/>
<rect x="260" y="680" width="20" height="20" fill="#30a2dc"/>
<rect x="280" y="680" width="20" height="20" fill="#30a2dc"/>
<rect x="300" y="680" width="20" height="20" fill="#30a2dc"/>
<rect x="320" y="680" width="20" height="20" fill="#30a2dc"/>
<rect x="340" y="680" width="20" height="20" fill="#30a2dc"/>
<rect x="360" y="680" width="20" height="20" fill="#30a2dc"/>
<rect x="380" y="680" width="20" height="20" fill="#30a2dc"/>
<rect x="400" y="680" width="20" height="20" fill="#30a2dc"/>
<rect x="420" y="680" width="20" height="20" fill="#30a2dc"/>
<rect x="440" y="680" width="20" height="20" fill="#30a2dc"/>
<rect x="460" y="680" width="20" height="20" fill="#30a2dc"/>
<rect x="480" y="680" width="20" height="20" fill="#30a2dc"/>
<rect x="120" y="700" width="20" height="20" fill="#f6ea96"/>
<rect x="140" y="700" width="20" height="20" fill="#f6ea96"/>
<rect x="160" y="700" width="20" height="20" fill="#f6ea96"/>
<rect x="180" y="700" width="20" height="20" fill="#f6ea96"/>
<rect x="200" y="700" width="20" height="20" fill="#e4efdc"/>
<rect x="220" y="700" width="20" height="20" fill="#e4efdc"/>
<rect x="240" y="700" width="20" height="20" fill="#e4efdc"/>
<rect x="260" y="700" width="20" height="20" fill="#30a2dc"/>
<rect x="280" y="700" width="20" height="20" fill="#30a2dc"/>
<rect x="300" y="700" width="20" height="20" fill="#30a2dc"/>
<rect x="320" y="700" width="20" height="20" fill="#30a2dc"/>
<rect x="340" y="700" width="20" height="20" fill="#30a2dc"/>
<rect x="360" y="700" width="20" height="20" fill="#30a2dc"/>
<rect x="380" y="700" width="20" height="20" fill="#30a2dc"/>
<rect x="400" y="700" width="20" height="20" fill="#30a2dc"/>
<rect x="420" y="700" width="20" height="20" fill="#30a2dc"/>
<rect x="440" y="700" width="20" height="20" fill="#30a2dc"/>
<rect x="460" y="700" width="20" height="20" fill="#30a2dc"/>
<rect x="480" y="700" width="20" height="20" fill="#30a2dc"/>
</g>
<g filter="url(#blur3)">
<ellipse cx="313" cy="405" rx="3" ry="4" fill="#f6e880" opacity="1"/>
<ellipse cx="283" cy="539" rx="3" ry="3" fill="#f0ec90" opacity="0.8"/>
<ellipse cx="465" cy="468" rx="5" ry="14" fill="#4a4498" opacity="1"/>
<ellipse cx="415" cy="451" rx="7" ry="5" fill="#2a88cc" opacity="0.6"/>
<ellipse cx="318" cy="558" rx="12" ry="20" fill="#2a80c6" opacity="0.6"/>
<ellipse cx="407" cy="508" rx="10" ry="12" fill="#2a80c6" opacity="0.5"/>
<ellipse cx="365" cy="668" rx="10" ry="7" fill="#2a80c6" opacity="0.5"/>
<ellipse cx="345" cy="356" rx="8" ry="10" fill="#2a8ccc" opacity="0.5"/>
<ellipse cx="215" cy="592" rx="8" ry="4" fill="#f8e890" opacity="0.9"/>
<ellipse cx="180" cy="608" rx="22" ry="5" fill="#f8ea90" opacity="0.9"/>
</g></g>
<polygon points="169.2,564 178,563.5 187.5,563 190.3,569.4 189.3,573.1 179.3,570.4 174.7,574.9 170.2,569.4" fill="#5cb6de" stroke="#7a98c0" stroke-width="0.9"/>
<polygon points="199.4,564 209.4,562 218.6,563 222.2,573 220.4,578.6 212,576 204,570" fill="#f2ea9c" stroke="#7a98c0" stroke-width="0.9"/>
<polygon points="267.4,369.8 263.7,383.5 259.6,400 257.9,420.5 253.6,439.4 247.6,458.2 236.5,480.5 222.8,497.6 218,500 210,508.8 204.4,507.6 202.8,510.4 200.4,518.4 205.2,519.2 204.4,523.2 206.8,528 200.4,528.4 189.2,532 187.5,540 198.5,540.1 208.1,544.2 219,551.1 231.4,555.2 226,558 220.4,564.8 223,572 223.2,581.2 225.9,586.7 226,594 238.2,599 235.5,590.8 243.7,582.6 249.2,584 249.2,589.5 256,589.5 261.5,588.1 267,581.2 272.5,579.9 272.5,589.5 275.2,592.2 280,591.9 288.2,583.7 294.4,581.6 297.5,589.8 299.5,598 304.6,606.3 310.8,612.4 321.1,611.4 331.3,608.3 335.5,610.4 341.6,618.6 351.9,623.7 359.1,624.7 362.2,630.9 366.3,631.9 363.2,639.1 361.1,644.3 358,653.5 353.9,663.8 348.8,671 350,678 352.9,684.3 358,682.3 366.3,684.3 375,683 382.7,684.3 387.8,667.9 386.8,659.7 380.6,653.5 376.5,643.2 395,624.7 386.8,620.6 388.9,612.4 398.1,598 399.1,581.6 398.1,571.3 390.9,563.1 384.7,554.9 380.6,544.6 375.5,534.4 378.3,531.5 387.4,526.1 392.9,522.4 400.2,526.1 411.1,524.2 420.3,526.1 433,522.4 449.5,515.1 452.2,509.6 447.6,504.2 440.3,500.5 440.3,493.2 445.8,489.5 454.9,489.5 458.6,482.2 471.4,471.3 470.5,460.3 472.3,453 468.6,447.6 466.8,440.3 464.1,439.3 447.6,440.3 440.3,436.6 438.5,428.4 440.3,425.6 442.2,414.7 455,413.8 462.2,412.9 470.5,412.9 471,398 472.9,385.3 479.3,372.5 482.9,361.6 481.1,347 482,332.3 482,328.7 473.8,326.9 472,324.1 470.1,318.6 456.4,314.1 453.7,310.4 449.1,297.6 440,296.7 437.3,295.8 415.3,301.3 400.7,305 378.8,305.9 364.2,310.4 346,319.6 335,328.7 326.8,339.7 324,352.5 294.5,373.6 283.8,379.9 275.6,378 273.8,369.8" fill="none" stroke="#5a6470" stroke-width="0.9"/>
<polygon points="294.5,373.6 324,352.3 325.3,359.2 324.7,372.9 322.6,380.4 330.8,383.8 339,387.9 345.9,385.2 354.1,386.6 348.6,387.9 343.8,397.5 343.2,412.6 348.6,420.8 340.4,422.2 329.5,431.8 314.4,442.7 302.1,453.7 300.7,460 291.1,453.7 297.3,445.5 292.5,441.4 297.3,435.9 297.3,431.8 293.8,424.9 293.8,416.7 298.6,417.4 302.1,419.5 307.5,415.3 313,409.9 315.8,407.1 315.8,401 310.3,399.6 306.2,400.3 301.4,396.2 300.7,387.3 297.3,379.7" fill="#dffcfc" stroke="none"/>
<polyline points="324,352.3 325.3,359.2 324.7,372.9 322.6,380.4 330.8,383.8 339,387.9 345.9,385.2 354.1,386.6 348.6,387.9 343.8,397.5 343.2,412.6 348.6,420.8 340.4,422.2 329.5,431.8 314.4,442.7 302.1,453.7 300.7,460 291.1,453.7 297.3,445.5 292.5,441.4 297.3,435.9 297.3,431.8 293.8,424.9 293.8,416.7 298.6,417.4 302.1,419.5 307.5,415.3 313,409.9 315.8,407.1 315.8,401 310.3,399.6 306.2,400.3 301.4,396.2 300.7,387.3 297.3,379.7 294.5,373.6" fill="none" stroke="#5f6b78" stroke-width="0.9"/>
<line x1="294.5" y1="373.6" x2="324" y2="352.3" stroke="#8ab0e8" stroke-width="0.9"/>
<path d="M315.8,407 Q330,418 329,432" fill="none" stroke="#8ab0e8" stroke-width="0.8"/>
<polygon points="267.4,365.2 266.5,354.3 272.9,341.5 279.3,336.9 283.8,347 281.1,358 273.8,365.2" fill="#a6d6e6" stroke="#60707e" stroke-width="0.8"/>
<polygon points="259,369.5 262,367.5 265.6,367.4 263,369.8" fill="#98cfe2" stroke="#60707e" stroke-width="0.8"/>
<polygon points="280.2,333.3 290,325 300.3,320.5 301.5,322.5 291,329.5 282,336" fill="#8ccae2" stroke="#60707e" stroke-width="0.8"/>
<polygon points="303.9,314.1 320,307 338.6,299.9 339.5,302.2 325,310.5 309.4,316.5" fill="#7cc2e0" stroke="#60707e" stroke-width="0.8"/>
<polygon points="344.1,297.7 360,296 375.2,296.7 374.2,299.5 360,301 349.6,304" fill="#74bee0" stroke="#60707e" stroke-width="0.8"/>
<polygon points="386.1,295.8 406.2,290.7 405.3,293.1 388,299.5" fill="#9ad0e4" stroke="#60707e" stroke-width="0.8"/>
<polygon points="413.5,284 420.8,285 419,287 414,286.5" fill="#8ccae2" stroke="#60707e" stroke-width="0.8"/>
<polygon points="424.5,284 430,283.5 428,285.5 425,285.5" fill="#8ccae2" stroke="#60707e" stroke-width="0.8"/>
<polygon points="172.4,547.2 175,543 186,541.6 196,542.5 204,544 208,548 209.5,555 206,561.5 197,562 190,555.5 183,551 176,554 172.8,552" fill="none" stroke="#7a98c0" stroke-width="0.9"/>
<polygon points="150.5,570.3 156,568 167,569.5 170.2,571 174.7,576 179.3,572 189.3,575 193,573 201.2,569 210,571 216,574 220.4,575.8 224.5,582.6 224.5,586.7 217.7,588.1 206.7,592.2 199.9,588.8 191.6,588.1 182.1,589.5 172.5,583.3 161.5,584 155,580 150,575" fill="none" stroke="#7a98c0" stroke-width="0.9"/>
<polygon points="143.7,595.6 157.4,590.8 171.1,593.6 180.7,600.4 191.6,597.7 201.2,593.6 210.8,597 220.4,597.7 225.9,596.3 238.2,599 225.9,599 219,605.9 212.2,611.4 202.6,616.8 190.3,619.6 182.1,618.2 180.7,611.4 168.4,610 162.9,605.9 158.8,605.9 157.4,612.7 150.5,612.7 145,610 143.7,600.4" fill="none" stroke="#7a98c0" stroke-width="0.9"/>
<polyline points="400.7,305 402.6,316 397,328.7 393.4,341.5 395.3,348.8 404.4,351.5 411.7,357.9 413.5,368.9 406.2,376.2 397,381.7 388,386.2 377,388 367.8,389.9 356.9,388 354.1,386.6" fill="none" stroke="#5d6468" stroke-width="0.8"/>
<polyline points="404.4,351.5 409.9,339.7 420.8,335.1 428.1,341.5 439.1,345.1 457.3,367 466.5,379.9 472.9,385.3" fill="none" stroke="#5d6468" stroke-width="0.8"/>
<polyline points="389.8,387.2 395.3,394.5 391.6,401.8 391,409.2 402,412.9 412.9,418.3 422.1,418.3 423.9,412.9 431.2,410.1 440.3,414.7" fill="none" stroke="#5d6468" stroke-width="0.8"/>
<polyline points="348.6,420.8 364.1,424.8 367.3,433 378.3,434.8 387.4,442.1 389.2,453 385.6,460.3 392.9,474 407.5,473.1 416.6,474.9 420.3,480.4 436.7,482.2 440.3,482.2" fill="none" stroke="#5d6468" stroke-width="0.8"/>
<polyline points="247.6,459.9 255.3,463.4 251.9,475.3 260.5,476.2 275.9,473.6 282.7,468.5 293,464.2 297.3,467.6" fill="none" stroke="#5d6468" stroke-width="0.8"/>
<polyline points="273.3,476.2 274.2,485.6 279.3,489 273.3,492.5 279.3,498.5 274.2,506.2 282.7,516.4 291.3,526.7 306.7,511.3 320.4,509.6 334.1,511.3 344.4,513.9 344.4,506.2 339.2,492.5 332.4,495.9 335.8,489 330.7,482.2 325.5,473.6" fill="none" stroke="#5d6468" stroke-width="0.8"/>
<polyline points="299.9,482.2 308.4,480.5 315.3,468.5" fill="none" stroke="#5d6468" stroke-width="0.8"/>
<polyline points="291.3,526.7 272.5,537 257.1,547.3" fill="none" stroke="#5d6468" stroke-width="0.8"/>
<polyline points="295,527 310,527 334,533 350,537 368,541 377.5,545.7" fill="none" stroke="#5d6468" stroke-width="0.8"/>
<polyline points="368.3,539.5 376.5,546.7 382.7,569.3 366.3,571.3 365.2,577.5 373.5,596 358,602.2 345.7,608.3 344.7,618.6" fill="none" stroke="#5d6468" stroke-width="0.8"/>
<polyline points="205.6,529.6 214.8,535.2 221.2,540 226,544 230.8,547.2 236.3,549.6 242,551.2 250,551.6 254.7,550.4 259.5,548 264.3,544.8 269.1,538.4" fill="none" stroke="#8090a8" stroke-width="3.6" stroke-linejoin="round"/>
<polyline points="205.6,529.6 214.8,535.2 221.2,540 226,544 230.8,547.2 236.3,549.6 242,551.2 250,551.6 254.7,550.4 259.5,548 264.3,544.8 269.1,538.4" fill="none" stroke="#d4dcf6" stroke-width="2.3" stroke-linejoin="round"/>
<polyline points="186,541.6 194,537.6 198.8,537.6 202,541.6 203.6,548 207.6,551.2 214.8,552.8 221.2,556 226,557.6 234,556.8 235.5,552 234.7,548" fill="none" stroke="#8090a8" stroke-width="3.6" stroke-linejoin="round"/>
<polyline points="186,541.6 194,537.6 198.8,537.6 202,541.6 203.6,548 207.6,551.2 214.8,552.8 221.2,556 226,557.6 234,556.8 235.5,552 234.7,548" fill="none" stroke="#d4dcf6" stroke-width="2.3" stroke-linejoin="round"/>
<polyline points="325.5,471.9 341,461.6 349.5,454.8 361.5,444.5 366.6,434.2 364.1,424.8" fill="none" stroke="#8090a8" stroke-width="3.6" stroke-linejoin="round"/>
<polyline points="325.5,471.9 341,461.6 349.5,454.8 361.5,444.5 366.6,434.2 364.1,424.8" fill="none" stroke="#d4dcf6" stroke-width="2.3" stroke-linejoin="round"/>
<polyline points="214,536 209,541 203,544" fill="none" stroke="#8090a8" stroke-width="3.6" stroke-linejoin="round"/>
<polyline points="214,536 209,541 203,544" fill="none" stroke="#d4dcf6" stroke-width="2.3" stroke-linejoin="round"/>
<polyline points="347,421.5 356,422 364,423.5 372,420 380,416" fill="none" stroke="#6a7888" stroke-width="3"/>
<polyline points="347,421.5 356,422 364,423.5 372,420 380,416" fill="none" stroke="#dffcfc" stroke-width="1.8"/>
<rect x="291" y="453" width="4" height="3" rx="1" fill="#d8e0f4"/>
<rect x="286" y="422" width="3" height="2" rx="1" fill="#d8e0f4"/>
<rect x="336" y="403" width="4" height="3" rx="1" fill="#d8e0f4"/>
<rect x="367" y="385" width="5" height="3" rx="1" fill="#d8e0f4"/>
<rect x="370" y="413" width="4" height="2" rx="1" fill="#d8e0f4"/>
<rect x="400" y="380" width="3" height="2" rx="1" fill="#d8e0f4"/>
<rect x="448" y="433" width="2" height="2" rx="1" fill="#d8e0f4"/>
<rect x="328" y="513" width="3" height="2" rx="1" fill="#d8e0f4"/>
<rect x="279" y="470" width="4" height="3" rx="1" fill="#d8e0f4"/>
<rect x="296" y="474" width="3" height="4" rx="1" fill="#d8e0f4"/>
<rect x="300" y="478" width="4" height="5" rx="1" fill="#d8e0f4"/>
<rect x="275" y="483" width="4" height="3" rx="1" fill="#d8e0f4"/>
<rect x="271" y="505" width="3" height="3" rx="1" fill="#d8e0f4"/>
<path d="M328.8,379.4 L332,377.5 L334,375 L337.5,372 L340.5,370.2 L344.5,369.7 M343.5,376.8 L347.8,373.8 M354,361 L357.5,360 M356.5,357 L357,362.5" fill="none" stroke="#dde4f6" stroke-width="2" stroke-linecap="round"/>
<rect x="356.5" y="376.5" width="8" height="5.5" rx="1" fill="#dde4f6"/>
<path d="M393,305 L396,310 L399,313" fill="none" stroke="#dde4f6" stroke-width="2"/>
<path d="M337.7,326.8 Q345,336 354.8,336 L362.8,325.7 L361.7,312" fill="none" stroke="#0a1cf0" stroke-width="0.9"/>
<path d="M326.3,342.9 L331.4,347.4 Q341,347.5 347.4,350.8 Q352,355 352.5,362.8 Q351,368 348.5,370.8 Q345,375.5 341.7,376.5 L336,375.4 L333.1,369.7 L328,361.1" fill="none" stroke="#0a1cf0" stroke-width="0.9"/>
<path d="M329.1,350.3 L330.3,358.3" fill="none" stroke="#0a1cf0" stroke-width="0.9"/>
<path d="M370,313 L372,315" fill="none" stroke="#0a1cf0" stroke-width="0.9"/>
<path d="M425,346 L433,345 L436,352 L432,361 L427,359 L423,352z" fill="none" stroke="#0a1cf0" stroke-width="0.9"/>
<path d="M447,355 L451,353 L458,360 L460,368 L453,370 L447,364z" fill="none" stroke="#0a1cf0" stroke-width="0.9"/>
<path d="M468,376 L470,381 L468,383" fill="none" stroke="#0a1cf0" stroke-width="0.9"/>
<path d="M405,451 L408,446 L414,444.5 L421,446 L424.5,451 L421,456 L414,458 L408,456z" fill="none" stroke="#0a1cf0" stroke-width="0.9"/>
<path d="M380,448 L381,452.5 L384.5,452 L384,448" fill="none" stroke="#0a1cf0" stroke-width="0.9"/>
<path d="M458.6,443.9 L457.7,454.9 L449.5,465.8 L440.3,476.8 L436.7,484 L436.7,489.5 L440.3,495 L444.9,489.5" fill="none" stroke="#0a1cf0" stroke-width="0.9"/>
<path d="M466.8,445.7 L464.1,456.7 L455,469.5 L452.2,478.6 L454,487.7" fill="none" stroke="#0a1cf0" stroke-width="0.9"/>
<path d="M389.2,526 L390,507 L404.7,491 L424.8,491 L419.3,511.5 L407.5,527" fill="none" stroke="#0a1cf0" stroke-width="0.9"/>
<path d="M444,502.3 L451.3,511.5" fill="none" stroke="#0a1cf0" stroke-width="0.9"/>
<path d="M438.5,511.5 L441,509.6" fill="none" stroke="#0a1cf0" stroke-width="0.9"/>
<path d="M307.8,534.2 L307.8,529.7 L315.8,526.3 Q328,530 331.8,534.2 L336.3,545.7 L338.6,559.4 L334,577.6 L327.2,590.2 L318.1,586.8 L306.7,579.9 L299.8,566.2 L299.8,557.1 L313.5,550.2 L318.1,543.4 L309,542.2z" fill="none" stroke="#0a1cf0" stroke-width="0.9"/>
<path d="M309,536 L312,532 L315.8,536z" fill="none" stroke="#0a1cf0" stroke-width="0.9"/>
<path d="M335.2,532 L338,528.5 L342,528.5 L344.3,532 L342,536.5 L338,536.5z" fill="none" stroke="#0a1cf0" stroke-width="0.9"/>
<path d="M286,566 Q295,567 295,574 Q294,582 286,582 Q277,581 277,574 Q278,566 286,566z" fill="none" stroke="#0a1cf0" stroke-width="0.9"/>
<path d="M336,597 L340,600 L341,604 L337,607.3 L332,604 L332,600z" fill="none" stroke="#0a1cf0" stroke-width="0.9"/>
<path d="M393.4,500 L386.6,522.8" fill="none" stroke="#0a1cf0" stroke-width="0.9"/>
<path d="M354.6,664.4 L366,675.8 L387.7,669" fill="none" stroke="#0a1cf0" stroke-width="0.9"/>
<path d="M362.6,661 L365,655 L368.3,660z" fill="none" stroke="#0a1cf0" stroke-width="0.9"/>
<path d="M274.8,385 L281,380.6 L286.2,383 L285,390 L281,393.1 L276,389z" fill="none" stroke="#0a1cf0" stroke-width="0.9"/>
<path d="M263.4,384 L269,386 L264,388.5" fill="none" stroke="#0a1cf0" stroke-width="0.9"/>
<path d="M258.8,406 L264,404.5 L268,408 L266,414 L258.8,414.8" fill="none" stroke="#0a1cf0" stroke-width="0.9"/>
<path d="M233.7,500 L232.5,503.5" fill="none" stroke="#0a1cf0" stroke-width="0.9"/>
<path d="M203.6,522.8 L205.2,524" fill="none" stroke="#0a1cf0" stroke-width="0.9"/>
<path d="M30.5,701 V706.5 H95 V701 M36.5,703 V706 M43,703 V706 M49.5,703 V706 M56,703 V706 M62.5,701 V706" fill="none" stroke="#000" stroke-width="1.4"/>
<text x="30" y="701.5" font-size="9" fill="#111" text-anchor="middle" font-family="Liberation Sans">0</text>
<text x="62.5" y="701.5" font-size="9" fill="#111" text-anchor="middle" font-family="Liberation Sans">25</text>
<text x="94.5" y="701.5" font-size="9" fill="#111" text-anchor="middle" font-family="Liberation Sans">50</text>
<text x="104.5" y="707" font-size="9" fill="#111" font-family="Liberation Sans">km</text>
<rect x="543.5" y="514.5" width="69" height="183" fill="rgba(255,255,255,0.45)" stroke="#bbb" stroke-width="1"/>
<path d="M556,518.5 L565,533.5 L565,658 L556,674.5 L547.2,658 L547.2,533.5z" fill="url(#legend)" stroke="#333" stroke-width="0.6"/>
<line x1="562" y1="534" x2="570.5" y2="534" stroke="#111" stroke-width="1"/>
<text x="575" y="535.3" font-size="12.5" font-weight="bold" fill="#111" font-family="Liberation Sans">2.00</text>
<line x1="562" y1="549" x2="570.5" y2="549" stroke="#111" stroke-width="1"/>
<text x="575" y="550.3" font-size="12.5" font-weight="bold" fill="#111" font-family="Liberation Sans">1.50</text>
<line x1="562" y1="564" x2="570.5" y2="564" stroke="#111" stroke-width="1"/>
<text x="575" y="565.3" font-size="12.5" font-weight="bold" fill="#111" font-family="Liberation Sans">1.00</text>
<line x1="562" y1="580" x2="570.5" y2="580" stroke="#111" stroke-width="1"/>
<text x="575" y="581.3" font-size="12.5" font-weight="bold" fill="#111" font-family="Liberation Sans">0.50</text>
<line x1="562" y1="595" x2="570.5" y2="595" stroke="#111" stroke-width="1"/>
<text x="575" y="596.3" font-size="12.5" font-weight="bold" fill="#111" font-family="Liberation Sans">0.00</text>
<line x1="562" y1="610" x2="570.5" y2="610" stroke="#111" stroke-width="1"/>
<text x="575" y="611.3" font-size="12.5" font-weight="bold" fill="#111" font-family="Liberation Sans">-0.50</text>
<line x1="562" y1="625.7" x2="570.5" y2="625.7" stroke="#111" stroke-width="1"/>
<text x="575" y="627.0" font-size="12.5" font-weight="bold" fill="#111" font-family="Liberation Sans">-1.00</text>
<line x1="562" y1="640.7" x2="570.5" y2="640.7" stroke="#111" stroke-width="1"/>
<text x="575" y="642.0" font-size="12.5" font-weight="bold" fill="#111" font-family="Liberation Sans">-1.50</text>
<line x1="562" y1="656.6" x2="570.5" y2="656.6" stroke="#111" stroke-width="1"/>
<text x="575" y="657.9" font-size="12.5" font-weight="bold" fill="#111" font-family="Liberation Sans">-2.00</text>
<text x="548" y="691" font-size="10" font-weight="bold" fill="#111" font-family="Liberation Sans">-</text>
<path d="M159.6,580.5 L151.5,563 A9.2,9.2 0 1 1 167.7,563z" fill="#8c8cfa" stroke="#7070e0" stroke-width="0.6"/>
<circle cx="160" cy="558" r="4.8" fill="#fff"/>
<circle cx="159.6" cy="580.2" r="2.2" fill="#000"/>
<rect x="527.5" y="262.5" width="37.5" height="37.5" rx="3.5" fill="#00679e" stroke="#777" stroke-width="1"/>
<rect x="565.5" y="262.5" width="38.5" height="37.5" rx="3.5" fill="#00679e" stroke="#777" stroke-width="1"/>
<rect x="539.5" y="278.5" width="13" height="3.2" fill="#fff"/>
<rect x="578.5" y="278.5" width="12.5" height="3.2" fill="#fff"/><rect x="583.2" y="273.8" width="3.2" height="12.5" fill="#fff"/>
</svg>
</div>
<!-- chart box -->
<div id="chart" class="abs" style="left:634px;top:252px;width:1199px;height:220px;background:#fff;box-shadow:0 1px 6px rgba(0,0,0,.45)">
<svg class="abs" style="left:0;top:0" width="1199" height="220" viewBox="634 252 1199 220">
<text x="1233" y="270" font-size="16" fill="#222" text-anchor="middle" font-family="Liberation Sans">SPI 6 mnd - Lokatie op de kaart</text>
<rect x="708.5" y="282.5" width="1109.5" height="140.5" fill="#f0f0f0" stroke="#d8d8d8" stroke-width="1"/>
<path d="M708.5 282 V423.5 H1818" fill="none" stroke="#aaa" stroke-width="2"/>
<line x1="709" x2="1818" y1="313" y2="313" stroke="#2d3190" stroke-width="2"/>
<line x1="709" x2="1818" y1="326.3" y2="326.3" stroke="#585aa8" stroke-width="2"/>
<line x1="709" x2="1818" y1="339.8" y2="339.8" stroke="#12a3de" stroke-width="2"/>
<line x1="709" x2="1818" y1="366.3" y2="366.3" stroke="#dceeee" stroke-width="2"/>
<line x1="709" x2="1818" y1="393.2" y2="393.2" stroke="#fdb562" stroke-width="2"/>
<line x1="709" x2="1818" y1="406.5" y2="406.5" stroke="#f26b3a" stroke-width="2"/>
<line x1="709" x2="1818" y1="419.9" y2="419.9" stroke="#a6192e" stroke-width="2"/>
<text x="703.5" y="316.6" font-size="10" fill="#111" text-anchor="end" font-family="Liberation Sans">Extreem nat</text>
<text x="703.5" y="329.90000000000003" font-size="10" fill="#111" text-anchor="end" font-family="Liberation Sans">Zeer nat</text>
<text x="703.5" y="343.40000000000003" font-size="10" fill="#111" text-anchor="end" font-family="Liberation Sans">Vrij nat</text>
<text x="703.5" y="369.90000000000003" font-size="10" fill="#111" text-anchor="end" font-family="Liberation Sans">Normaal</text>
<text x="703.5" y="396.8" font-size="10" fill="#111" text-anchor="end" font-family="Liberation Sans">Vrij droog</text>
<text x="703.5" y="410.1" font-size="10" fill="#111" text-anchor="end" font-family="Liberation Sans">Zeer droog</text>
<text x="703.5" y="423.5" font-size="10" fill="#111" text-anchor="end" font-family="Liberation Sans">Extreem droog</text>
<line x1="765.4" x2="765.4" y1="423" y2="429" stroke="#999" stroke-width="1"/>
<text x="765.4" y="439.5" font-size="12" font-weight="bold" fill="#555" text-anchor="middle" font-family="Liberation Serif">jul. 24</text>
<line x1="939.5" x2="939.5" y1="423" y2="429" stroke="#999" stroke-width="1"/>
<text x="939.5" y="439.5" font-size="12" font-weight="bold" fill="#555" text-anchor="middle" font-family="Liberation Serif">aug. 24</text>
<line x1="1113.8" x2="1113.8" y1="423" y2="429" stroke="#999" stroke-width="1"/>
<text x="1113.8" y="439.5" font-size="12" font-weight="bold" fill="#555" text-anchor="middle" font-family="Liberation Serif">sep. 24</text>
<line x1="1282.7" x2="1282.7" y1="423" y2="429" stroke="#999" stroke-width="1"/>
<text x="1282.7" y="439.5" font-size="12" font-weight="bold" fill="#555" text-anchor="middle" font-family="Liberation Serif">okt. 24</text>
<line x1="1457" x2="1457" y1="423" y2="429" stroke="#999" stroke-width="1"/>
<text x="1457" y="439.5" font-size="12" font-weight="bold" fill="#555" text-anchor="middle" font-family="Liberation Serif">nov. 24</text>
<line x1="1626" x2="1626" y1="423" y2="429" stroke="#999" stroke-width="1"/>
<text x="1626" y="439.5" font-size="12" font-weight="bold" fill="#555" text-anchor="middle" font-family="Liberation Serif">dec. 24</text>
<line x1="1801" x2="1801" y1="423" y2="429" stroke="#999" stroke-width="1"/>
<text x="1801" y="439.5" font-size="12" font-weight="bold" fill="#555" text-anchor="middle" font-family="Liberation Serif">jan. 25</text>
<line x1="1356.5" x2="1356.5" y1="283" y2="423" stroke="#c8c8c8" stroke-width="1"/>
<path d="M1785 354 Q1795 350 1800 355 Q1806 352 1812 356 L1818 355 L1818 364 Q1810 366 1804 360 Q1795 361 1785 357z" fill="#aaa"/>
<polyline points="708.6,285.2 716.2,288.7 724.2,290.6 732.3,290 748.4,288.7 753.8,290.6 764.5,298.1 771.2,292 776.6,298.6 781.9,300.5 787.3,299.2 793.5,292.7 799.4,291.7 804.2,292.2 810.1,288.5 815.4,290.3 827.5,286.6 839.6,288.2 847.6,287.4 855.7,288.7 861,289.3 871.8,291.1 878.5,293.6 883.9,293.3 889.2,290.1 895.9,292.5 909.3,292.7 914.7,293.8 922.7,296.5 928.1,296.8 933.5,294.6 950.9,294.9 956.3,300 961.6,300 968.3,306.2 981.8,307 989.8,308.6 996.5,308.3 1000,310 1017.4,311.5 1024.1,314.2 1034.9,316.1 1044.2,317.9 1063,323.6 1083.1,325.5 1096.5,329.5 1108.6,330 1115.3,332.2 1126,332.2 1142.1,333.5 1148.8,329.2 1159.6,327.6 1164.9,322.8 1175.7,314.7 1187.7,315.3 1198.4,316.6 1209.2,320.1 1219.9,320.6 1241.4,320.6 1252.1,319 1265.5,316.1 1278.9,318.7 1287,318.7 1295,320.6 1307.1,323.3 1321.8,324.1 1333.9,322.8 1340.6,323.3 1348.6,326 1356.1,326.3 1367.4,328.7 1380.8,329.2 1394.2,328.9 1404.9,333.5 1413,335.6 1420,335.9 1434.8,334.9 1446.8,338.3 1457.6,340.8 1462.9,345.3 1481.7,344.8 1503.2,346.4 1508.5,348.3 1516.6,357.7 1523.3,358.2 1540.7,358.5 1551.4,355.8 1559.5,353.6 1564.8,355.5 1575.6,356.3 1580.9,355 1587.6,358.2 1597,356.9 1605.1,355.5 1623.9,356.6 1634.6,355 1642.6,354.2 1649.3,349.6 1654.7,352.3 1661.4,350.2 1674.8,350.2 1693.6,352.8 1712.4,354.4 1725.8,352.8 1739.2,351.5" fill="none" stroke="#000" stroke-width="2" stroke-linejoin="round"/>
<polyline points="1739.2,351.5 1745.9,348.3 1763.3,347.5 1778.1,350.2 1787.5,355.5 1800.9,357.1 1810.3,359.8 1817.8,359" fill="none" stroke="#000" stroke-width="2.2" stroke-dasharray="3.5 2.5"/>
<circle cx="1356.3" cy="326.5" r="3.6" fill="#000" stroke="#fff" stroke-width="1.4"/>
<circle cx="1739.2" cy="351.5" r="4" fill="#fff" stroke="#000" stroke-width="1.5"/>
<rect x="1367" y="348" width="156.5" height="48.5" fill="rgba(255,255,255,0.85)" stroke="#ccc" stroke-width="1"/>
<text x="1383.5" y="366" font-size="14.5" fill="#222" font-family="Liberation Sans">Datum: 14/10/2024</text>
<text x="1383.5" y="388" font-size="14.5" fill="#222" letter-spacing="-0.4" font-family="Liberation Sans">SPI 6: 1.50</text>
</svg>
</div>
<!-- buttons -->
<div class="btn" style="left:8px;top:732px;width:113px;height:38px">SPI 6 mnd<span class="caret"></span></div>
<div class="btn" style="left:397px;top:732px;width:213px;height:38px">december<span class="caret"></span></div>
<div class="btn" style="left:620px;top:732px;width:146px;height:38px">21<span class="caret"></span></div>
<div class="btn" style="left:776px;top:732px;width:213px;height:38px">2024<span class="caret"></span></div>
<div class="btn" style="left:1774px;top:732px;width:79px;height:38px">Actueel</div>
</div>
</body></html>
